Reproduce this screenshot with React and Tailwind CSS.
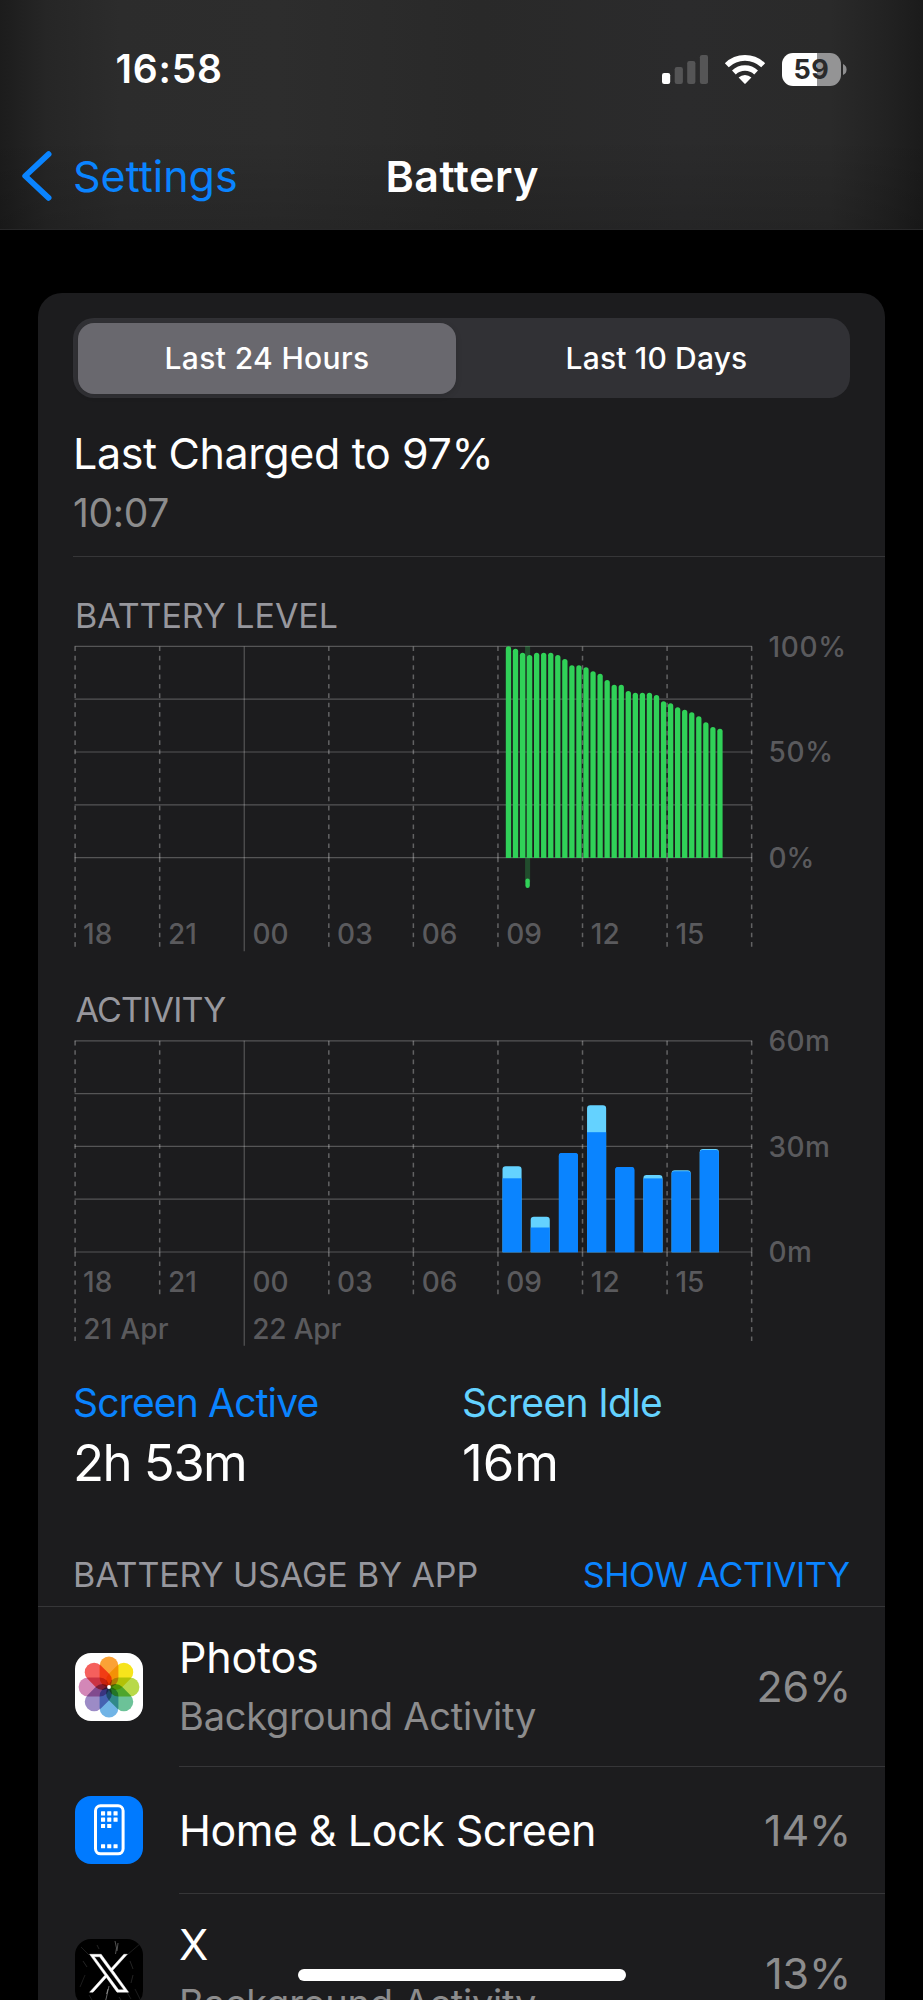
const LEVEL_TOPS = [
  646.3, 648.7, 652.7, 655, 652.7, 652.7, 652.7, 655, 659, 665.3, 665.3, 667.3, 671.3, 673.7, 680,
  684.8, 684.8, 691, 692.7, 692.7, 692.7, 695, 701.2, 703.4, 707.4, 709.7, 712.2, 716.2, 722.3, 727, 728.7,
];

const ACTIVITY_BARS = [
  { top: 1166.3, active: 1178.3 },
  { top: 1216.7, active: 1227.5 },
  { top: 1153.1, active: 1153.1 },
  { top: 1105.3, active: 1132.2 },
  { top: 1167.1, active: 1167.1 },
  { top: 1175.1, active: 1178.4 },
  { top: 1170.2, active: 1171.2 },
  { top: 1149.1, active: 1150.1 },
];

const GRID_LEFT = 75.1;
const GRID_STEP = 84.57;
const HOURS = ['18', '21', '00', '03', '06', '09', '12', '15'];
const LABEL_DX = [8, 8.4, 8.3, 8.3, 8.3, 8.3, 8.3, 8.3];

function Grid({ top, bottom, innerEnd, outerEnd, solidEnd }) {
  const right = GRID_LEFT + GRID_STEP * 8;
  return (
    <g stroke="#ffffff" strokeOpacity="0.25" strokeWidth="1.2" fill="none">
      {[0, 1, 2, 3, 4].map((i) => {
        const y = top + ((bottom - top) * i) / 4;
        return <line key={i} x1={GRID_LEFT - 0.5} x2={right + 0.5} y1={y} y2={y} />;
      })}
      {Array.from({ length: 9 }, (_, i) => {
        const x = GRID_LEFT + GRID_STEP * i;
        if (i === 2) return <line key={i} x1={x} x2={x} y1={top} y2={solidEnd} />;
        const end = i === 0 || i === 8 ? outerEnd : innerEnd;
        return (
          <path
            key={i}
            d={`M${x} ${top}V${bottom}M${x} ${bottom}V${end}`}
            strokeDasharray="4.69 4.69"
            strokeOpacity="0.31"
            strokeWidth="1.5"
          />
        );
      })}
    </g>
  );
}

function HourLabels({ y }) {
  return HOURS.map((h, i) => (
    <text key={h} x={GRID_LEFT + GRID_STEP * i + LABEL_DX[i]} y={y}>
      {h}
    </text>
  ));
}

function LevelChart() {
  return (
    <svg viewBox="38 636 847 334" width="847" height="334" className="block overflow-visible">
      <Grid top={646.4} bottom={857.6} innerEnd={947} outerEnd={947} solidEnd={951.3} />
      <rect x="525.1" y="646" width="5" height="236" fill="#30d158" fillOpacity="0.27" />
      {LEVEL_TOPS.map((t, i) => {
        const x = 505.8 + i * 7.05;
        return <path key={i} d={`M${x} 857.9V${t + 2.6}a2.6 2.6 0 0 1 5.3 0V857.9Z`} fill="#30d158" />;
      })}
      <rect x="525.4" y="878.6" width="4.4" height="9.3" rx="2.2" fill="#30d158" />
      <g className="font-[Inter] text-[28px] font-medium" fill="#5a5a5d">
        <HourLabels y={944.2} />
        <g letterSpacing="0.7">
          <text x="768.4" y="656.8">100%</text>
          <text x="768.4" y="762.4">50%</text>
          <text x="768.4" y="868" letterSpacing="0">0%</text>
        </g>
      </g>
    </svg>
  );
}

function ActivityChart() {
  return (
    <svg viewBox="38 1030 847 330" width="847" height="330" className="block overflow-visible">
      <Grid top={1040.8} bottom={1252} innerEnd={1294.4} outerEnd={1341.3} solidEnd={1345.8} />
      {ACTIVITY_BARS.map(({ top, active }, i) => {
        const x = 502.5 + i * 28.18;
        return (
          <g key={i}>
            <path d={`M${x} 1252.3V${top + 3.2}q0 -3.2 3.2 -3.2h12.7q3.2 0 3.2 3.2V1252.3Z`} fill={active > top ? '#64d2ff' : '#0a84ff'} />
            {active - top > 2 ? (
              <rect x={x} y={active} width="19.1" height={1252.3 - active} fill="#0a84ff" />
            ) : (
              <path d={`M${x} 1252.3V${active + 2.6}q0 -2.6 2.6 -2.6h13.9q2.6 0 2.6 2.6V1252.3Z`} fill="#0a84ff" />
            )}
          </g>
        );
      })}
      <g className="font-[Inter] text-[28px] font-medium" fill="#5a5a5d">
        <HourLabels y={1291.5} />
        <text x="83.3" y="1339.2" letterSpacing="0.18">21 Apr</text>
        <text x="252.3" y="1339.2" letterSpacing="-0.2">22 Apr</text>
        <g letterSpacing="0.5">
          <text x="768.4" y="1051.2">60m</text>
          <text x="768.4" y="1156.8">30m</text>
          <text x="768.4" y="1262.3">0m</text>
        </g>
      </g>
    </svg>
  );
}

function StatusIcons() {
  return (
    <div className="flex items-center">
      <svg viewBox="662 53 46.4 30" width="46.4" height="30">
        <rect x="662" y="72" width="8.2" height="11" rx="2.2" fill="#fff" />
        <g fill="#555556">
          <rect x="674.7" y="66" width="8.2" height="17" rx="2.2" />
          <rect x="687.2" y="60" width="8.2" height="23" rx="2.2" />
          <rect x="699.9" y="54" width="8.2" height="29" rx="2.2" />
        </g>
      </svg>
      <svg viewBox="724 53 42 30.5" width="42" height="30.5" className="ml-[15.6px]">
        <g fill="none" stroke="#fff">
          <path d="M726.8 64.2A26.2 26.2 0 0 1 763.2 64.2" strokeWidth="5.6" />
          <path d="M733.9 71.5A16 16 0 0 1 756.1 71.5" strokeWidth="5.4" />
        </g>
        <path d="M738.6 76.6A9.4 9.4 0 0 1 751.4 76.6L745.6 82.6Q745 83.3 744.4 82.6Z" fill="#fff" />
      </svg>
      <div className="ml-4 flex items-center">
        <div className="flex h-[33px] w-[59px] items-center justify-center rounded-[11px] bg-linear-to-r from-white from-[59%] to-[#949495] to-[59%]">
          <span className="text-[27px] leading-[33px] font-bold tracking-[0.5px] text-[#2a2a2b]">59</span>
        </div>
        <svg viewBox="0 0 4 11" width="4" height="11" className="ml-[2px]">
          <path d="M0 0Q3.6 1.5 3.6 5.5T0 11Z" fill="#8f8f90" />
        </svg>
      </div>
    </div>
  );
}

const PETALS = ['#fba236', '#f7e41c', '#b8d949', '#6cc298', '#71b4e6', '#9c8bc6', '#d387b7', '#f5605d'];

function PhotosIcon() {
  return (
    <svg viewBox="-34 -34 68 68" width="68" height="68" className="isolate block rounded-[16px] bg-white">
      {PETALS.map((c, i) => (
        <rect
          key={c}
          x="-9.4"
          y="-30.4"
          width="18.8"
          height="30.6"
          rx="9.4"
          fill={c}
          transform={`rotate(${i * 45})`}
          className="mix-blend-multiply"
        />
      ))}
      <circle r="1.9" fill="#fff" />
    </svg>
  );
}

function HomeIcon() {
  const dots = [
    [26, 15.3], [32.2, 15.3], [38.5, 15.3],
    [26, 21.6], [32.2, 21.6], [38.5, 21.6],
    [26, 27.9], [32.2, 27.9],
    [26, 48.2], [32.2, 48.2], [38.5, 48.2],
  ];
  return (
    <svg viewBox="0 0 68 68" width="68" height="68" className="relative -top-px block rounded-[16px] bg-[#007aff]">
      <rect x="20.5" y="9.8" width="27.6" height="48" rx="5" fill="none" stroke="#fff" strokeWidth="3" />
      {dots.map(([x, y]) => (
        <rect key={`${x}-${y}`} x={x} y={y} width="4.1" height="4.1" rx="0.5" fill="#fff" />
      ))}
    </svg>
  );
}

function XIcon() {
  return (
    <svg viewBox="0 0 68 68" width="68" height="68" className="relative -top-px block rounded-[16px] bg-black">
      <g stroke="#fff" fill="none" strokeWidth="0.8">
        <path d="M40 2L41.5 9L40.5 15M43 4L42 12" strokeOpacity="0.4" />
        <path d="M34 47L31.5 58L29 68M31.5 55L33 50" strokeOpacity="0.5" />
        <path d="M66 4L52 16M60 50L66 62M6 8L14 16M10 36L5 48M14 56L20 66M50 50L56 60" strokeOpacity="0.14" />
        <path d="M22 6L24 10M55 22L58 30M58 36L56 44M8 22L12 28M44 58L48 64" strokeOpacity="0.18" />
      </g>
      <path
        transform="translate(14.6 15.3) scale(0.0325 0.0309)"
        fill="#fff"
        stroke="#fff"
        strokeWidth="14"
        d="M714.163 519.284L1160.89 0H1055.03L667.137 450.887L357.328 0H0L468.492 681.821L0 1226.37H105.866L515.491 750.218L842.672 1226.37H1200L714.137 519.284H714.163ZM569.165 687.828L521.697 619.934L144.011 79.6944H306.615L611.412 515.685L658.88 583.579L1055.08 1150.3H892.476L569.165 687.854V687.828Z"
      />
    </svg>
  );
}

function AppRow({ icon, name, nameClass, detail, percent, last, height }) {
  return (
    <div className={`flex pl-[37px] ${height}`}>
      <div className="flex w-[104px] shrink-0 items-center">{icon}</div>
      <div className={`flex flex-1 items-center justify-between pr-[34px] ${last ? '' : 'border-b border-[#363638]'}`}>
        <div className="flex flex-col">
          <span className={`text-[43px] leading-[59px] text-white ${nameClass}`}>{name}</span>
          {detail && <span className="text-[38px] leading-[59px] tracking-[-0.21px] text-[#8c8c8d]">{detail}</span>}
        </div>
        <span className="text-[43px] leading-[59px] tracking-[-0.2px] text-[#8c8c8d]">{percent}</span>
      </div>
    </div>
  );
}

export default function App() {
  return (
    <div className="relative flex h-[2000px] w-[923px] flex-col overflow-hidden bg-black font-[Inter,sans-serif] whitespace-nowrap text-white">
      <header className="flex h-[230px] shrink-0 flex-col border-b border-[#282829] bg-[linear-gradient(to_bottom,transparent_60%,rgba(0,0,0,0.14)),linear-gradient(to_right,#1c1c1c,#262626_5%,#2c2c2c_13%,#2d2d2d_30%,#292929_52%,#2b2b2c_74%,#2a2a2a_90%,#222222_96%,#1b1b1b)]">
        <div className="flex h-[138px] items-center justify-between pr-[76px] pl-[115.5px]">
          <span className="text-[39px] leading-[46px] font-semibold tracking-[0.8px]">16:58</span>
          <StatusIcons />
        </div>
        <div className="grid h-[76px] grid-cols-[1fr_auto_1fr] items-center">
          <div className="flex items-center pl-[21px] text-[#0a84ff]">
            <svg viewBox="0 0 31 50" width="31" height="50" className="shrink-0">
              <path d="M27.6 3.2L4.2 25L27.6 46.8" fill="none" stroke="currentColor" strokeWidth="5.8" strokeLinecap="round" strokeLinejoin="round" />
            </svg>
            <span className="ml-[21px] text-[43px] leading-[52px]">Settings</span>
          </div>
          <h1 className="pl-[1.5px] text-[43px] leading-[52px] font-semibold tracking-[0.5px]">Battery</h1>
        </div>
      </header>

      <main className="mx-[38px] mt-[63px] flex h-[1760px] shrink-0 flex-col rounded-t-[24px] bg-[#1c1c1e]">
        <div className="mt-[25px] mr-[35px] ml-[35px] flex h-[80px] shrink-0 items-center rounded-[21px] bg-[#313135] pl-[5px] text-[30px] font-medium">
          <div className="flex h-[71px] w-[378px] items-center justify-center rounded-[16px] bg-[#69686e] tracking-[0.35px] shadow-[0_2px_6px_rgba(0,0,0,0.12)]">
            Last 24 Hours
          </div>
          <div className="flex flex-1 items-center justify-center pl-[7px] tracking-[0.17px]">Last 10 Days</div>
        </div>

        <div className="mt-[27px] ml-[35px] flex h-[132px] shrink-0 flex-col border-b border-[#363638]">
          <span className="text-[43px] leading-[56px] tracking-[-0.38px]">Last Charged to 97%</span>
          <span className="mt-px text-[39px] leading-[62px] tracking-[-0.3px] text-[#8c8c8d]">10:07</span>
        </div>

        <h2 className="mt-[39px] ml-[37px] text-[34px] leading-[40px] tracking-[-0.06px] text-[#97979d]">BATTERY LEVEL</h2>
        <LevelChart />

        <h2 className="mt-[20px] ml-[37.5px] text-[34px] leading-[40px] tracking-[-0.8px] text-[#97979d]">ACTIVITY</h2>
        <ActivityChart />

        <div className="mt-[16px] ml-[35px] flex shrink-0">
          <div className="flex w-[389px] flex-col">
            <span className="text-[39px] leading-[54px] tracking-[-0.82px] text-[#0a84ff]">Screen Active</span>
            <span className="text-[51px] leading-[66px] tracking-[-1.6px]">2h 53m</span>
          </div>
          <div className="flex flex-col">
            <span className="text-[39px] leading-[54px] tracking-[-0.66px] text-[#64d2ff]">Screen Idle</span>
            <span className="text-[51px] leading-[66px] tracking-[-0.1px]">16m</span>
          </div>
        </div>

        <div className="mt-[53px] flex h-[58px] shrink-0 justify-between border-b border-[#363638] pr-[35.5px] pl-[35px] text-[34px] leading-[51px]">
          <span className="tracking-[-0.12px] text-[#97979d]">BATTERY USAGE BY APP</span>
          <span className="tracking-[-0.46px] text-[#0a84ff]">SHOW ACTIVITY</span>
        </div>

        <AppRow icon={<PhotosIcon />} name="Photos" nameClass="tracking-[-0.22px]" detail="Background Activity" percent="26%" height="h-[160px] shrink-0" />
        <AppRow icon={<HomeIcon />} name="Home & Lock Screen" nameClass="tracking-[-0.5px]" percent="14%" height="h-[127px] shrink-0" />
        <AppRow icon={<XIcon />} name="X" nameClass="" detail="Background Activity" percent="13%" height="h-[159px] shrink-0" last />
      </main>

      <div className="absolute bottom-[19px] left-1/2 h-[12px] w-[328px] -translate-x-1/2 rounded-full bg-white" />
    </div>
  );
}
